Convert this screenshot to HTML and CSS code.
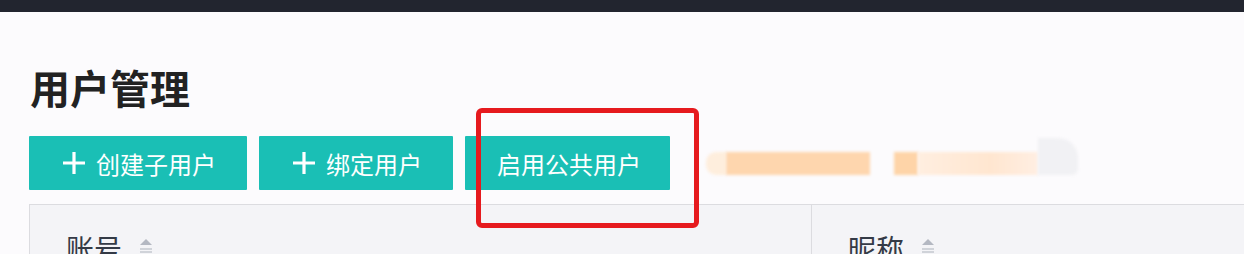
FILE: index.html
```html
<!DOCTYPE html>
<html lang="zh-CN">
<head>
    <meta charset="UTF-8">
    <title>用户管理</title>
    <link rel="stylesheet" href="styles.css">
</head>
<body>
    <div class="topbar"></div>

    <div class="page">
        <h1 class="title">用户管理</h1>

        <div class="toolbar">
            <button class="btn">
                <svg class="plus" viewBox="0 0 24 24" width="24" height="24"><path d="M12 1v22M1 12h22" stroke="#fff" stroke-width="3.2" fill="none"/></svg>
                创建子用户
            </button>
            <button class="btn">
                <svg class="plus" viewBox="0 0 24 24" width="24" height="24"><path d="M12 1v22M1 12h22" stroke="#fff" stroke-width="3.2" fill="none"/></svg>
                绑定用户
            </button>
            <div class="marked">
                <button class="btn btn-public">启用公共用户</button>
                <!-- red highlight box drawn over the screenshot -->
                <span class="mark-box"></span>
            </div>

            <!-- blurred / hidden text -->
            <div class="hidden-text">
                <span class="blur b1"></span>
                <span class="blur b2"></span>
                <span class="blur b3"></span>
                <span class="blur b4"></span>
                <span class="blur b5"></span>
            </div>
        </div>

        <div class="table-head">
            <div class="th th-account">
                账号
                <svg class="sort" viewBox="0 0 14 22" width="14" height="22"><path d="M7 2l6 6H1z" fill="#b4b8c2"/><path d="M1 12h12M1 15h12" stroke="#c4c7cf" stroke-width="1.5"/></svg>
            </div>
            <div class="th">
                昵称
                <svg class="sort" viewBox="0 0 14 22" width="14" height="22"><path d="M7 2l6 6H1z" fill="#b4b8c2"/><path d="M1 12h12M1 15h12" stroke="#c4c7cf" stroke-width="1.5"/></svg>
            </div>
        </div>
    </div>
</body>
</html>
```

FILE: styles.css
```css
body {
    margin: 0;
    background-color: #fcfbfd;
    font-family: "Noto Sans CJK SC", "Noto Sans", sans-serif;
    overflow: hidden;
}

.topbar {
    height: 12px;
    background-color: #22252f;
}

.page {
    padding-left: 29px;
}

.title {
    margin: 55px 0 0 1px;
    font-size: 40px;
    line-height: 40px;
    font-weight: bold;
    color: #222;
}

.toolbar {
    display: flex;
    align-items: center;
    gap: 12px;
    margin-top: 29px;
}

.btn {
    display: flex;
    align-items: center;
    gap: 10px;
    height: 54px;
    padding: 0 31px 0 33px;
    border: none;
    border-radius: 1px;
    background-color: #1abfb5;
    color: #fff;
    font-family: inherit;
    font-size: 24px;
    cursor: pointer;
}

.btn-public {
    padding: 0 29px 0 32px;
}

.plus {
    display: block;
}

.marked {
    position: relative;
}

.mark-box {
    position: absolute;
    left: 11px;
    top: -28px;
    width: 213px;
    height: 110px;
    border: 5px solid #e61a1e;
    border-radius: 6px;
}

.hidden-text {
    display: flex;
    align-items: center;
    margin-left: 24px;
    height: 40px;
}

.blur {
    display: block;
    height: 23px;
    filter: blur(1.5px);
}

.b1 {
    width: 20px;
    background-color: #feeedd;
    border-radius: 10px 0 0 10px;
}

.b2 {
    width: 144px;
    background-color: #fed6ae;
}

.b3 {
    width: 24px;
    margin-left: 24px;
    background-color: #fed4a8;
}

.b4 {
    width: 120px;
    background: linear-gradient(90deg, #ffeee0, #ffe6d0 60%, #ffeee2);
}

.b5 {
    width: 40px;
    height: 37px;
    margin-top: -14px;
    background-color: #f1f1f4;
    border-radius: 0 20px 6px 0;
}

.table-head {
    display: flex;
    margin-top: 14px;
    height: 60px;
    border-top: 1px solid #dcdce0;
    border-left: 1px solid #dcdce0;
    background-color: #f4f4f7;
}

.th {
    display: flex;
    align-items: flex-start;
    padding: 23px 0 0 36px;
    font-size: 28px;
    color: #343a46;
}

.th-account {
    width: 745px;
    border-right: 1px solid #dcdce0;
}

.sort {
    margin: 9px 0 0 17px;
}
```
